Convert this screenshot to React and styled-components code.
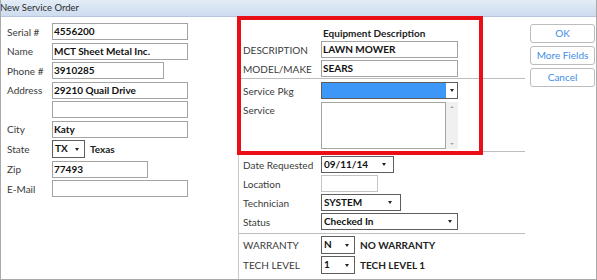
import React from "react";
import styled, { createGlobalStyle } from "styled-components";

const GlobalStyle = createGlobalStyle`
  html, body {
    margin: 0;
    padding: 0;
    background: #ffffff;
  }
  body {
    font-family: Lato, "Liberation Sans", sans-serif;
    font-size: 10px;
    color: #333;
  }
`;

const Window = styled.div`
  width: 597px;
  height: 280px;
  box-sizing: border-box;
  border-left: 1px solid #a9a9a9;
  border-right: 1px solid #a9a9a9;
  border-bottom: 1px solid #a9a9a9;
  display: flex;
  flex-direction: column;
  overflow: hidden;
`;

const TitleBar = styled.div`
  height: 17px;
  flex: none;
  box-sizing: border-box;
  background: linear-gradient(#e3ecf7, #cddcef);
  border-bottom: 1px solid #b6c6dc;
  font-size: 9.5px;
  line-height: 16px;
  color: #2b2b2b;
  text-indent: -1px;
`;

const Body = styled.div`
  flex: 1;
  display: flex;
  min-height: 0;
`;

const LeftPanel = styled.div`
  width: 237px;
  flex: none;
  box-sizing: border-box;
  padding: 6px 0 0 6px;
  display: flex;
  flex-direction: column;
  gap: 2.5px;
`;

const Row = styled.div`
  display: flex;
  align-items: center;
  height: ${(p) => p.$h || 17}px;
`;

const Label = styled.div`
  width: ${(p) => p.$w}px;
  flex: none;
  color: #3a3a3a;
  white-space: nowrap;
  align-self: ${(p) => (p.$top ? "flex-start" : "center")};
  padding-top: ${(p) => (p.$top ? 2 : 0)}px;
`;

const Input = styled.div`
  width: ${(p) => p.$w}px;
  height: 100%;
  box-sizing: border-box;
  border: 1px solid ${(p) => (p.$light ? "#c4c4c4" : "#a4a4a4")};
  background: #fff;
  font-weight: 700;
  color: #111;
  padding: 0 1px;
  line-height: 14px;
  white-space: nowrap;
`;

const Select = styled.div`
  width: ${(p) => p.$w}px;
  height: 100%;
  box-sizing: border-box;
  border: 1px solid #5e5e5e;
  background: #fff;
  font-weight: 700;
  color: #111;
  padding: 0 1px 0 2px;
  line-height: 15px;
  white-space: nowrap;
  display: flex;
`;

const SelectText = styled.span`
  flex: 1;
`;

const Caret = styled.span`
  flex: none;
  width: 12px;
  display: flex;
  align-items: center;
  justify-content: center;
  margin-right: ${(p) => p.$mr ?? 0}px;
  &::after {
    content: "";
    border-left: 2.5px solid transparent;
    border-right: 2.5px solid transparent;
    border-top: 3px solid #222;
  }
`;

const Filled = styled.div`
  width: ${(p) => p.$w}px;
  height: 100%;
  box-sizing: border-box;
  border: 1px solid #5e5e5e;
  display: flex;
`;

const Highlight = styled.div`
  flex: 1;
  background: #3d97f7;
`;

const DropButton = styled.span`
  width: 11px;
  flex: none;
  background: #fff;
  display: flex;
  align-items: center;
  justify-content: center;
  &::after {
    content: "";
    border-left: 2.5px solid transparent;
    border-right: 2.5px solid transparent;
    border-top: 3px solid #222;
  }
`;

const Aside = styled.span`
  margin-left: ${(p) => p.$ml}px;
  font-weight: 700;
  color: #222;
`;

const MiddlePanel = styled.div`
  position: relative;
  width: 287px;
  flex: none;
  box-sizing: border-box;
  border-left: 1px solid #c8c8c8;
  display: flex;
  flex-direction: column;
`;

const Section = styled.div`
  display: flex;
  flex-direction: column;
  gap: ${(p) => p.$gap}px;
  padding: ${(p) => p.$pt}px 0 ${(p) => p.$pb}px 4px;
  border-bottom: ${(p) => (p.$last ? "none" : "1px solid #bdbdbd")};
`;

const Heading = styled.div`
  height: 14px;
  line-height: 14px;
  padding-left: 80px;
  font-weight: 700;
  color: #222;
  margin-bottom: -1px;
`;

const TextArea = styled.div`
  width: 137px;
  height: 100%;
  display: flex;
`;

const Box = styled.div`
  flex: 1;
  border: 1px solid #a4a4a4;
  background: #fff;
`;

const ScrollBar = styled.div`
  width: 12px;
  background: #f0f0f0;
  display: flex;
  flex-direction: column;
  justify-content: space-between;
  align-items: center;
  padding: 4px 0;
  &::before {
    content: "";
    border-left: 2px solid transparent;
    border-right: 2px solid transparent;
    border-bottom: 2px solid #a8a8a8;
  }
  &::after {
    content: "";
    border-left: 2px solid transparent;
    border-right: 2px solid transparent;
    border-top: 2px solid #a8a8a8;
  }
`;

const RedFrame = styled.div`
  position: absolute;
  left: -2px;
  top: -1px;
  width: 246px;
  height: 139px;
  box-sizing: border-box;
  border: 4px solid #ea0f16;
  pointer-events: none;
`;

const ButtonColumn = styled.div`
  display: flex;
  flex-direction: column;
  gap: 3px;
  padding: 7px 0 0 5px;
`;

const ActionButton = styled.div`
  width: 65px;
  height: 19px;
  box-sizing: border-box;
  border: 1px solid #bcbcbc;
  border-radius: 3px;
  background: #fff;
  color: #3f8ee8;
  text-align: center;
  line-height: 17px;
  font-size: 10px;
`;

const leftRows = [
  { label: "Serial #", value: "4556200", w: 136 },
  { label: "Name", value: "MCT Sheet Metal Inc.", w: 136 },
  { label: "Phone #", value: "3910285", w: 112 },
  { label: "Address", value: "29210 Quail Drive", w: 136 },
  { label: "", value: "", w: 136 },
  { label: "City", value: "Katy", w: 136 },
];

export default function App() {
  return (
    <>
      <GlobalStyle />
      <Window>
        <TitleBar>New Service Order</TitleBar>
        <Body>
          <LeftPanel>
            {leftRows.map((r, i) => (
              <Row key={i}>
                <Label $w={45}>{r.label}</Label>
                <Input $w={r.w}>{r.value}</Input>
              </Row>
            ))}
            <Row $h={18}>
              <Label $w={45}>State</Label>
              <Select $w={33}>
                <SelectText>TX</SelectText>
                <Caret />
              </Select>
              <Aside $ml={5}>Texas</Aside>
            </Row>
            <Row>
              <Label $w={45}>Zip</Label>
              <Input $w={96}>77493</Input>
            </Row>
            <Row>
              <Label $w={45}>E-Mail</Label>
              <Input $w={136}></Input>
            </Row>
          </LeftPanel>

          <MiddlePanel>
            <Section $pt={9} $pb={1} $gap={2}>
              <Heading>Equipment Description</Heading>
              <Row>
                <Label $w={78}>DESCRIPTION</Label>
                <Input $w={137}>LAWN MOWER</Input>
              </Row>
              <Row>
                <Label $w={78}>MODEL/MAKE</Label>
                <Input $w={137}>SEARS</Input>
              </Row>
            </Section>
            <Section $pt={3} $pb={2} $gap={3}>
              <Row>
                <Label $w={78}>Service Pkg</Label>
                <Filled $w={137}>
                  <Highlight />
                  <DropButton />
                </Filled>
              </Row>
              <Row $h={47}>
                <Label $w={78} $top>Service</Label>
                <TextArea>
                  <Box />
                  <ScrollBar />
                </TextArea>
              </Row>
            </Section>
            <Section $pt={4} $pb={3} $gap={2}>
              <Row>
                <Label $w={78}>Date Requested</Label>
                <Select $w={73}>
                  <SelectText>09/11/14</SelectText>
                  <Caret $mr={2} />
                </Select>
              </Row>
              <Row>
                <Label $w={78}>Location</Label>
                <Input $w={57} $light></Input>
              </Row>
              <Row>
                <Label $w={78}>Technician</Label>
                <Select $w={80}>
                  <SelectText>SYSTEM</SelectText>
                  <Caret $mr={3} />
                </Select>
              </Row>
              <Row>
                <Label $w={78}>Status</Label>
                <Select $w={137}>
                  <SelectText>Checked In</SelectText>
                  <Caret />
                </Select>
              </Row>
            </Section>
            <Section $pt={2} $pb={0} $gap={2} $last>
              <Row $h={18}>
                <Label $w={78}>WARRANTY</Label>
                <Select $w={34}>
                  <SelectText>N</SelectText>
                  <Caret />
                </Select>
                <Aside $ml={5}>NO WARRANTY</Aside>
              </Row>
              <Row $h={18}>
                <Label $w={78}>TECH LEVEL</Label>
                <Select $w={34}>
                  <SelectText>1</SelectText>
                  <Caret />
                </Select>
                <Aside $ml={5}>TECH LEVEL 1</Aside>
              </Row>
            </Section>
            <RedFrame />
          </MiddlePanel>

          <ButtonColumn>
            <ActionButton>OK</ActionButton>
            <ActionButton>More Fields</ActionButton>
            <ActionButton>Cancel</ActionButton>
          </ButtonColumn>
        </Body>
      </Window>
    </>
  );
}
